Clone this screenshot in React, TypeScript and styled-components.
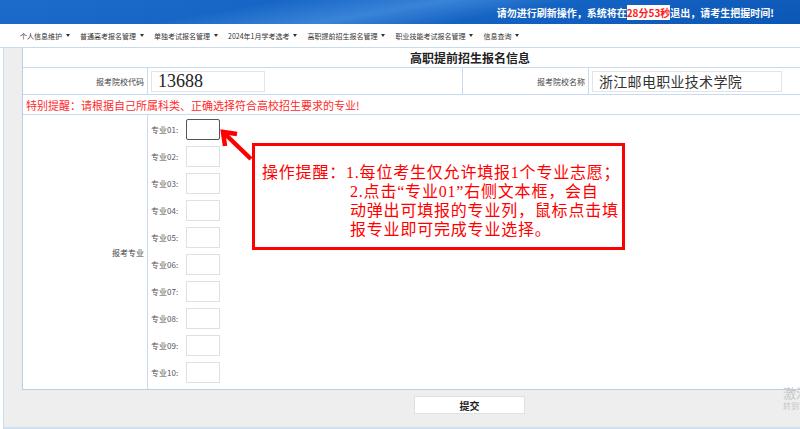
import React from "react";
import styled, { createGlobalStyle } from "styled-components";

const GlobalStyle = createGlobalStyle`
  html, body {
    margin: 0;
    padding: 0;
    background: #ffffff;
  }
  * {
    box-sizing: border-box;
  }
`;

const Page = styled.div`
  position: relative;
  width: 800px;
  height: 429px;
  overflow: hidden;
  font-family: "Noto Sans CJK SC", "Noto Sans", sans-serif;
  color: #333;
`;

const TopBar = styled.header`
  height: 24px;
  display: flex;
  align-items: center;
  justify-content: flex-end;
  padding-right: 26px;
  background: linear-gradient(170deg, #1d6bca 0%, #1766c6 30%, #3a84d8 48%, #1462c2 62%, #0b57b5 100%);
`;

const Notice = styled.span`
  color: #ffffff;
  font-size: 10px;
  font-weight: bold;
`;

const Countdown = styled.span`
  color: #ff1a1a;
  background: #ffffff;
`;

const Nav = styled.nav`
  height: 24px;
  display: flex;
  align-items: center;
  gap: 10px;
  padding-left: 20px;
  border-bottom: 1px solid #c8daef;
  background: #ffffff;
`;

const NavItem = styled.span`
  font-size: 7px;
  color: #333;
  display: flex;
  align-items: center;
  gap: 4px;
  &::after {
    content: "";
    border-left: 2.5px solid transparent;
    border-right: 2.5px solid transparent;
    border-top: 3px solid #333;
  }
`;

const Main = styled.main`
  height: 381px;
  margin-left: 3px;
  padding-left: 18px;
  background: #eeeeee;
  border-left: 1px solid #c8daef;
  border-bottom: 2px solid #cfe0f3;
`;

const Sheet = styled.section`
  width: 895px;
  background: #ffffff;
  border-left: 1px solid #b9cde6;
  border-bottom: 1px solid #b9cde6;
`;

const TitleRow = styled.div`
  height: 20px;
  display: flex;
  align-items: center;
  justify-content: center;
  font-size: 12px;
  font-weight: bold;
  color: #222;
  border-bottom: 1px solid #c8daef;
`;

const FieldRow = styled.div`
  height: 27px;
  display: grid;
  grid-template-columns: 125px 315px 126px 1fr;
  border-bottom: 1px solid #c8daef;
`;

const Label = styled.div`
  display: flex;
  align-items: center;
  justify-content: flex-end;
  padding-right: 3px;
  font-size: 8px;
  color: #444;
  border-right: 1px solid #c8daef;
`;

const Value = styled.div<{ $divided?: boolean }>`
  display: flex;
  align-items: center;
  padding-left: 3px;
  border-right: ${(p) => (p.$divided ? "1px solid #c8daef" : "none")};
`;

const CodeBox = styled.div`
  width: 114px;
  height: 21px;
  display: flex;
  align-items: center;
  padding-left: 6px;
  border: 1px solid #e4e4e4;
  color: #222;
  font-family: "Liberation Serif", serif;
  font-size: 18px;
`;

const NameBox = styled.div`
  width: 190px;
  height: 21px;
  display: flex;
  align-items: center;
  padding-left: 6px;
  border: 1px solid #e4e4e4;
  color: #333;
  font-size: 14px;
  letter-spacing: 0.3px;
`;

const WarnRow = styled.div`
  height: 20px;
  display: flex;
  align-items: center;
  padding-left: 3px;
  font-size: 11px;
  color: #ff2a2a;
  border-bottom: 1px solid #c8daef;
`;

const MajorRow = styled.div`
  height: 274px;
  display: grid;
  grid-template-columns: 125px 1fr;
`;

const MajorList = styled.ul`
  list-style: none;
  margin: 0;
  padding: 1px 0 0 3px;
`;

const MajorItem = styled.li`
  height: 27px;
  display: flex;
  align-items: center;
  gap: 4px;
  font-size: 8px;
  color: #555;
`;

const MajorLabel = styled.span`
  width: 31px;
`;

const MajorInput = styled.div<{ $active?: boolean }>`
  width: 34px;
  height: 21px;
  border: 1px solid ${(p) => (p.$active ? "#555" : "#e0e0e0")};
  border-radius: ${(p) => (p.$active ? "2px" : "0")};
  background: #fff;
`;

const Footer = styled.div`
  width: 895px;
  display: flex;
  justify-content: center;
  padding-top: 6px;
`;

const SubmitButton = styled.button`
  width: 111px;
  height: 18px;
  padding: 0;
  background: #ffffff;
  border: 1px solid #e0e0e0;
  font-family: "Noto Sans CJK SC", sans-serif;
  font-size: 10px;
  font-weight: bold;
  color: #222;
`;

const Callout = styled.div`
  position: absolute;
  left: 252px;
  top: 143px;
  width: 373px;
  height: 107px;
  border: 3px solid #ff0000;
  background: #ffffff;
  padding: 17px 0 0 7px;
  color: #ff0000;
  font-family: "Liberation Serif", "Noto Sans CJK SC", serif;
  font-size: 16px;
  letter-spacing: 0.8px;
  line-height: 19px;
`;

const CalloutLine = styled.div<{ $indent?: boolean }>`
  padding-left: ${(p) => (p.$indent ? "88px" : "0")};
  white-space: nowrap;
`;

const Pointer = styled.svg`
  position: absolute;
  left: 215px;
  top: 124px;
`;

const Watermark = styled.div`
  position: absolute;
  left: 783px;
  top: 385px;
  width: 17px;
  overflow: hidden;
  color: #c6c6c6;
  white-space: nowrap;
`;

const WatermarkTitle = styled.div`
  font-size: 13px;
  line-height: 15px;
`;

const WatermarkHint = styled.div`
  font-size: 8px;
  line-height: 11px;
`;

const navItems = [
  "个人信息维护",
  "普通高考报名管理",
  "单独考试报名管理",
  "2024年1月学考选考",
  "高职提前招生报名管理",
  "职业技能考试报名管理",
  "信息查询",
];

const majors = Array.from({ length: 10 }, (_, i) => String(i + 1).padStart(2, "0"));

const App: React.FC = () => {
  return (
    <Page>
      <GlobalStyle />
      <TopBar>
        <Notice>
          请勿进行刷新操作，系统将在<Countdown>28分53秒</Countdown>退出，请考生把握时间!
        </Notice>
      </TopBar>
      <Nav>
        {navItems.map((item) => (
          <NavItem key={item}>{item}</NavItem>
        ))}
      </Nav>

      <Main>
        <Sheet>
          <TitleRow>高职提前招生报名信息</TitleRow>
          <FieldRow>
            <Label>报考院校代码</Label>
            <Value $divided>
              <CodeBox>13688</CodeBox>
            </Value>
            <Label>报考院校名称</Label>
            <Value>
              <NameBox>浙江邮电职业技术学院</NameBox>
            </Value>
          </FieldRow>
          <WarnRow>特别提醒：请根据自己所属科类、正确选择符合高校招生要求的专业!</WarnRow>
          <MajorRow>
            <Label>报考专业</Label>
            <MajorList>
              {majors.map((m, i) => (
                <MajorItem key={m}>
                  <MajorLabel>专业{m}:</MajorLabel>
                  <MajorInput $active={i === 0} />
                </MajorItem>
              ))}
            </MajorList>
          </MajorRow>
        </Sheet>
        <Footer>
          <SubmitButton>提交</SubmitButton>
        </Footer>
      </Main>

      <Pointer width="45" height="42" viewBox="0 0 45 42">
        <path d="M9 9 L36 35" stroke="#ff0000" strokeWidth="4.5" fill="none" />
        <path d="M22 10 L8 8 L10 22" stroke="#ff0000" strokeWidth="4.5" fill="none" />
      </Pointer>

      <Callout>
        <CalloutLine>操作提醒：1.每位考生仅允许填报1个专业志愿；</CalloutLine>
        <CalloutLine $indent>2.点击“专业01”右侧文本框，会自</CalloutLine>
        <CalloutLine $indent>动弹出可填报的专业列，鼠标点击填</CalloutLine>
        <CalloutLine $indent>报专业即可完成专业选择。</CalloutLine>
      </Callout>

      <Watermark>
        <WatermarkTitle>激活 Windows</WatermarkTitle>
        <WatermarkHint>转到"设置"以激活 Windows。</WatermarkHint>
      </Watermark>
    </Page>
  );
};

export default App;
